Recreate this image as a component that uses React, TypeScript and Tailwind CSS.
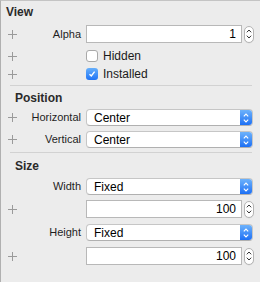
import React from 'react';

const Plus = () => (
  <svg width="9" height="9" viewBox="0 0 9 9" className="block">
    <path d="M4.5 0v9M0 4.5h9" stroke="#9a9a9a" strokeWidth="1" />
  </svg>
);

const Stepper = () => (
  <div className="ml-[2px] w-[10px] h-[17px] rounded-[5px] border border-[#b4b4b4] bg-white flex flex-col items-center justify-center gap-[2px] shadow-[0_0.5px_0_rgba(0,0,0,0.08)]">
    <svg width="6" height="4" viewBox="0 0 6 4"><path d="M0.8 3.3L3 1L5.2 3.3" fill="none" stroke="#333" strokeWidth="1" /></svg>
    <svg width="6" height="4" viewBox="0 0 6 4"><path d="M0.8 0.7L3 3L5.2 0.7" fill="none" stroke="#333" strokeWidth="1" /></svg>
  </div>
);

const Row = ({ label, plus, className, children }: { label?: string; plus?: boolean; className?: string; children: React.ReactNode }) => (
  <div className={`flex items-center ${className ?? ''}`}>
    <div className="w-[85px] flex items-center h-full">
      <div className="w-[16px] pl-[7px] flex items-center">{plus && <Plus />}</div>
      <div className="flex-1 text-right pr-[5px] text-[11px] text-[#1e1e1e]">{label}</div>
    </div>
    {children}
  </div>
);

const NumberField = ({ value }: { value: string }) => (
  <>
    <div className="w-[156px] h-full border border-[#b8b8b8] bg-white flex items-center justify-end pr-[5px] text-[12px] text-black">
      {value}
    </div>
    <Stepper />
  </>
);

const Select = ({ value }: { value: string }) => (
  <div className="w-[167px] h-full rounded-[4px] bg-white border border-[#c6c6c6] border-b-[#b0b0b0] flex overflow-hidden">
    <div className="flex-1 flex items-center pl-[7px] text-[12px] text-black">{value}</div>
    <div className="w-[12px] h-full bg-gradient-to-b from-[#6db2fb] to-[#1c6ff4] flex flex-col items-center justify-center gap-[2px]">
      <svg width="6" height="4" viewBox="0 0 6 4"><path d="M0.8 3.3L3 1L5.2 3.3" fill="none" stroke="#fff" strokeWidth="1.1" /></svg>
      <svg width="6" height="4" viewBox="0 0 6 4"><path d="M0.8 0.7L3 3L5.2 0.7" fill="none" stroke="#fff" strokeWidth="1.1" /></svg>
    </div>
  </div>
);

const Checkbox = ({ checked, label }: { checked?: boolean; label: string }) => (
  <div className="flex items-center">
    {checked ? (
      <div className="w-[12px] h-[12px] rounded-[3px] bg-gradient-to-b from-[#66affb] to-[#1f73f5] flex items-center justify-center">
        <svg width="8" height="8" viewBox="0 0 8 8"><path d="M1.5 4.2L3.3 6L6.6 1.6" fill="none" stroke="#fff" strokeWidth="1.4" /></svg>
      </div>
    ) : (
      <div className="w-[12px] h-[12px] rounded-[3px] border border-[#a9a9a9] bg-white" />
    )}
    <span className="ml-[5px] text-[12px] text-[#1a1a1a]">{label}</span>
  </div>
);

const Separator = ({ className }: { className?: string }) => (
  <div className={`ml-[9px] w-[242px] h-px bg-[#d2d2d2] ${className ?? ''}`} />
);

const Header = ({ title, className }: { title: string; className?: string }) => (
  <div className={`h-[16px] leading-[16px] text-[12px] font-bold text-[#2a2a2a] ${className ?? ''}`}>{title}</div>
);

export default function App() {
  return (
    <div
      className="w-[260px] h-[282px] bg-[#ececec] border-l border-t border-l-[#b0b0b0] border-t-[#c4c4c4] overflow-hidden"
      style={{ fontFamily: '"Liberation Sans", Arial, sans-serif' }}
    >
      <Header title="View" className="mt-[3px] pl-[5px]" />
      <Row label="Alpha" plus className="mt-[5px] h-[18px]">
        <NumberField value="1" />
      </Row>
      <Row plus className="mt-[4px] h-[18px]">
        <Checkbox label="Hidden" />
      </Row>
      <Row plus className="h-[18px]">
        <Checkbox checked label="Installed" />
      </Row>
      <Separator className="mt-[2px]" />

      <Header title="Position" className="mt-[4px] pl-[14px]" />
      <Row label="Horizontal" plus className="mt-[3px] h-[17px]">
        <Select value="Center" />
      </Row>
      <Row label="Vertical" plus className="mt-[5px] h-[17px]">
        <Select value="Center" />
      </Row>
      <Separator className="mt-[4px]" />

      <Header title="Size" className="mt-[5px] pl-[14px]" />
      <Row label="Width" className="mt-[4px] h-[17px]">
        <Select value="Fixed" />
      </Row>
      <Row plus className="mt-[5px] h-[18px]">
        <NumberField value="100" />
      </Row>
      <Row label="Height" className="mt-[6px] h-[17px]">
        <Select value="Fixed" />
      </Row>
      <Row plus className="mt-[6px] h-[18px]">
        <NumberField value="100" />
      </Row>
    </div>
  );
}
